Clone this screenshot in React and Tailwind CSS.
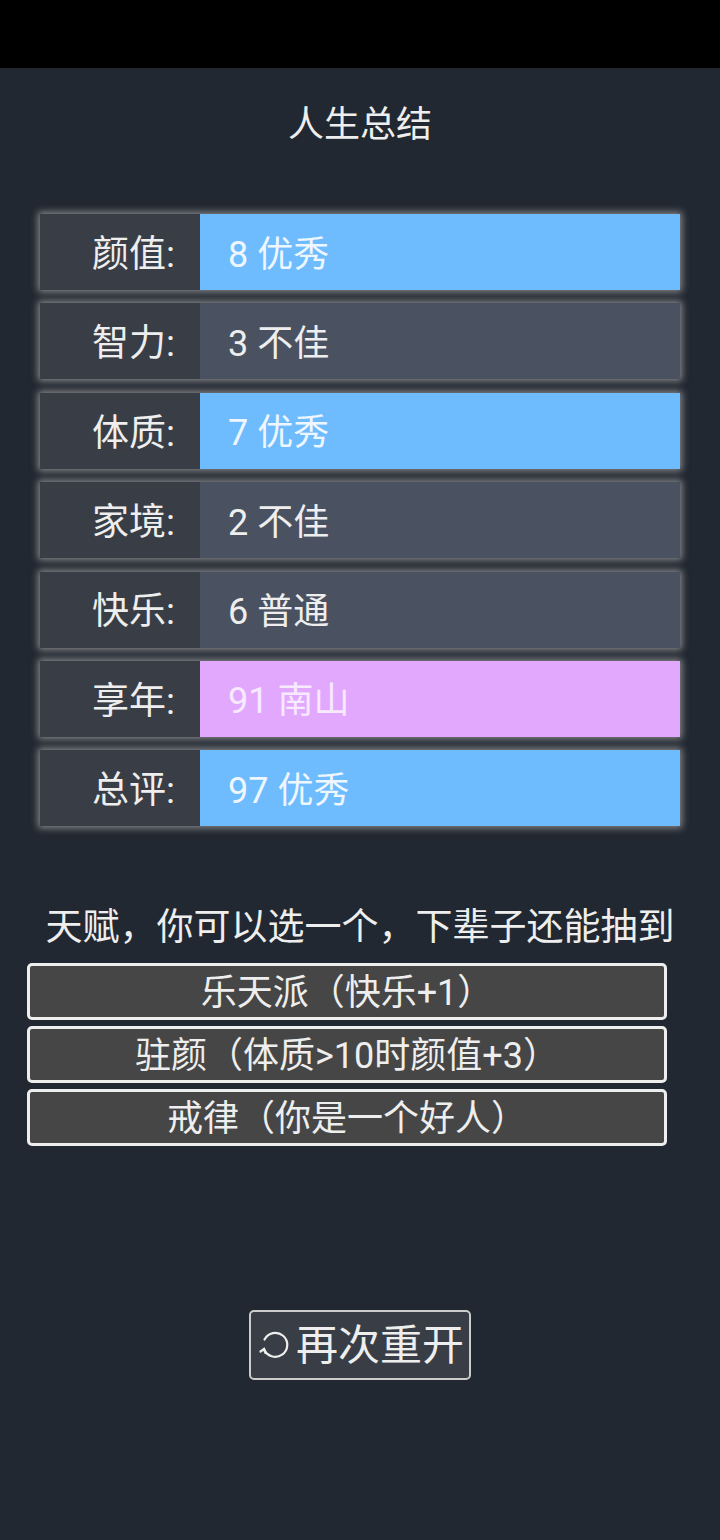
import React from 'react';

const font = { fontFamily: 'Roboto, "Noto Sans CJK SC", "Noto Sans", sans-serif' };

const stats = [
  { label: '颜值', value: '8 优秀', tone: 'blue' },
  { label: '智力', value: '3 不佳', tone: 'plain' },
  { label: '体质', value: '7 优秀', tone: 'blue' },
  { label: '家境', value: '2 不佳', tone: 'plain' },
  { label: '快乐', value: '6 普通', tone: 'plain' },
  { label: '享年', value: '91 南山', tone: 'purple' },
  { label: '总评', value: '97 优秀', tone: 'blue' },
];

const talents = ['乐天派（快乐+1）', '驻颜（体质>10时颜值+3）', '戒律（你是一个好人）'];

const toneClass = {
  blue: 'bg-[#6ebcfe] text-[#eef7ff]',
  plain: 'bg-[#4a5261] text-[#eeeeee]',
  purple: 'bg-[#e2a8fe] text-[#f7eaff]',
};

function RestartIcon() {
  return (
    <svg width="36" height="36" viewBox="0 0 36 36" fill="none" stroke="#eeeeee" strokeWidth="2.2" strokeLinecap="round">
      <path d="M8.5 12.5 A12 12 0 1 1 8 22" />
      <path d="M4.5 24.5 L8 22 L9.5 26" />
    </svg>
  );
}

export default function App() {
  return (
    <div className="min-h-[1540px] bg-[#222831] text-[#eeeeee]" style={font}>
      <div className="h-[68px] bg-black" />

      <h1 className="mt-[30px] text-center text-[36px] leading-[54px] font-normal">人生总结</h1>

      <div className="mt-[62px] mx-[40px] flex flex-col gap-[13.4px]">
        {stats.map((s) => (
          <div
            key={s.label}
            className="flex h-[76px] shadow-[0_0_7px_2px_rgba(170,170,170,0.75)]"
          >
            <div className="w-[160px] bg-[#393e46] flex items-center justify-end pt-[5px] pr-[25px] text-[37px]">
              {s.label}:
            </div>
            <div className={`flex-1 flex items-center pt-[5px] pl-[28px] text-[36px] ${toneClass[s.tone]}`}>
              {s.value}
            </div>
          </div>
        ))}
      </div>

      <p className="mt-[77px] text-center text-[37px] leading-[50px]">
        天赋，你可以选一个，下辈子还能抽到
      </p>

      <div className="mt-[10px] ml-[27px] w-[640px] flex flex-col gap-[6px]">
        {talents.map((t) => (
          <div
            key={t}
            className="h-[57px] border-[3px] border-[#eeeeee] rounded-[5px] bg-[#464646] flex items-center justify-center pt-[2px] text-[36px]"
          >
            {t}
          </div>
        ))}
      </div>

      <div className="mt-[164px] flex justify-center">
        <button className="h-[70px] w-[222px] border-2 border-[#cccccc] rounded-[5px] bg-[#393e46] flex items-center justify-center gap-[4px] text-[42px] text-[#eeeeee]">
          <RestartIcon />
          <span>再次重开</span>
        </button>
      </div>
    </div>
  );
}
